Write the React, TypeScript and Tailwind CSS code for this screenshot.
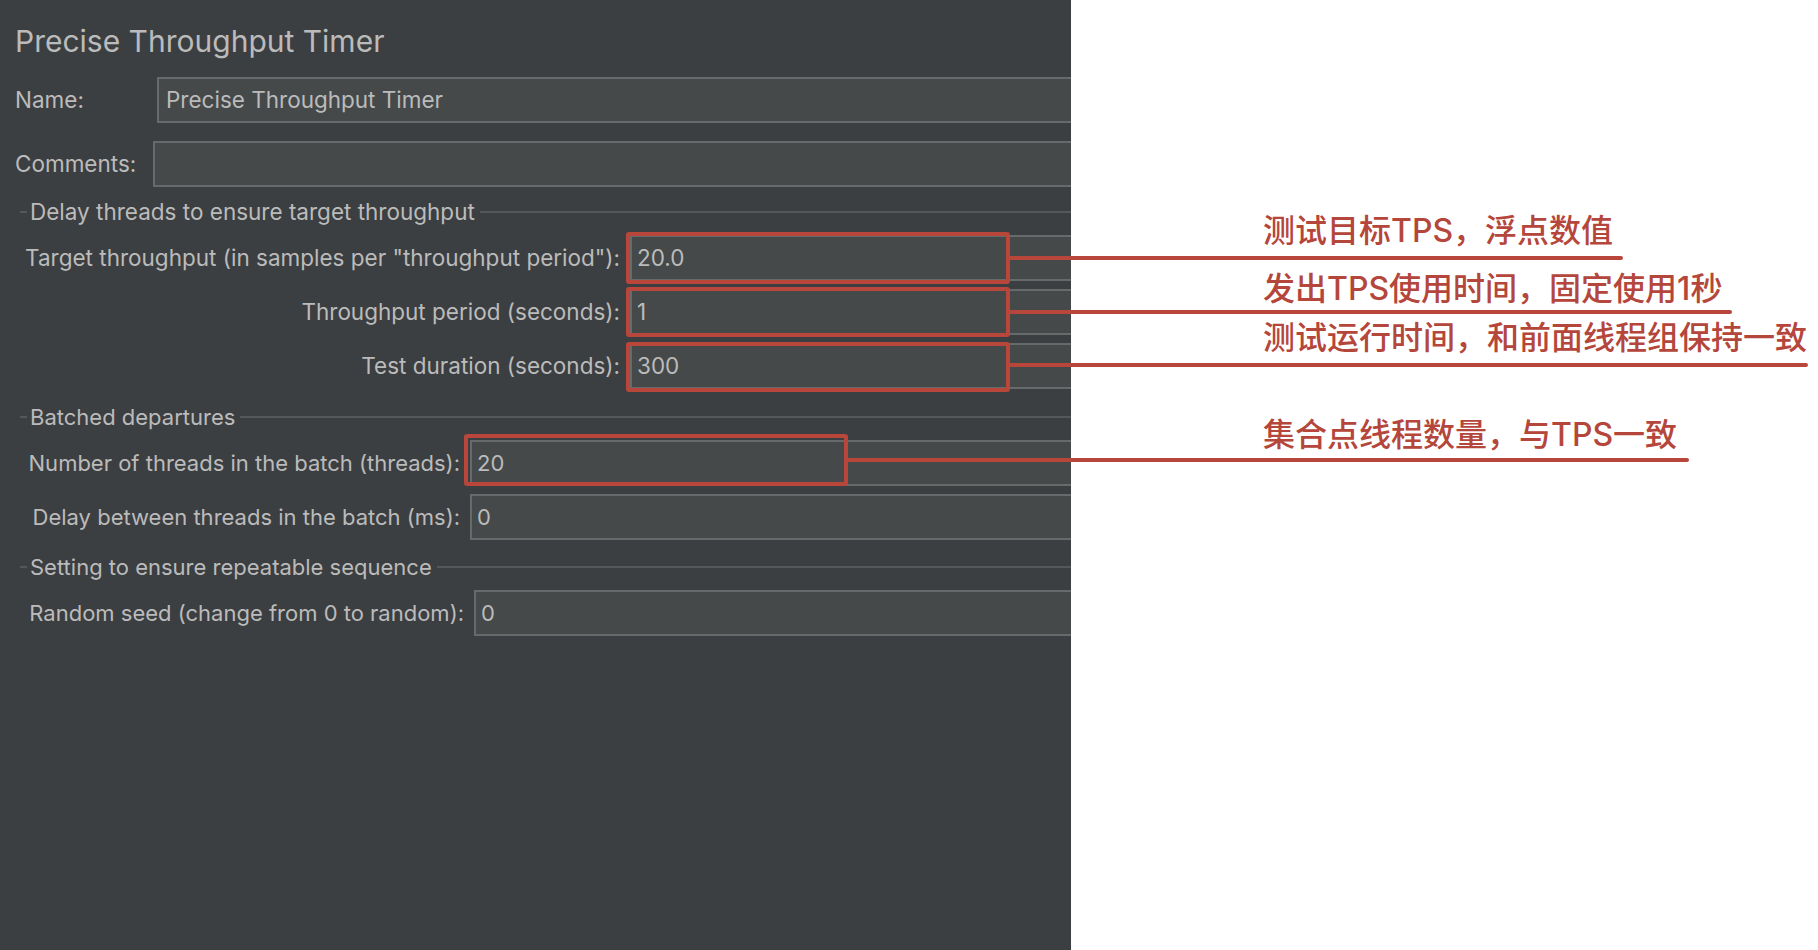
import React from 'react';

const UI_FONT = { fontFamily: 'Inter, "Liberation Sans", sans-serif' };
const NOTE_FONT = { fontFamily: 'Inter, "Noto Sans CJK SC", sans-serif' };

function Field({ value = '', className = '' }: { value?: string; className?: string }) {
    return (
        <div
            className={`flex-1 h-[46px] flex items-center bg-[#45494a] border-2 border-r-0 border-[#676a6b] text-[#bbbbbb] whitespace-nowrap ${className}`}
        >
            {value}
        </div>
    );
}

function SectionTitle({ title }: { title: string }) {
    return (
        <div className="flex items-center h-[24px] pl-[20px]">
            <span className="w-[7px] h-[2px] bg-[#555859]" />
            <span className="ml-[3px] mr-[5px] text-[#bbbbbb] whitespace-nowrap">{title}</span>
            <span className="flex-1 h-[2px] bg-[#555859]" />
        </div>
    );
}

function Row({ label, value, labelWidth }: { label: string; value: string; labelWidth: string }) {
    return (
        <div className="flex items-center pl-[26px]">
            <div className={`${labelWidth} flex justify-end whitespace-nowrap text-[#bbbbbb]`}>{label}</div>
            <Field value={value} className="ml-[10px] pl-[5px]" />
        </div>
    );
}

// Red call-out boxes and leader lines drawn over the form
function Callouts() {
    const red = '#b8463b';
    return (
        <svg className="absolute inset-0 pointer-events-none" width={1818} height={950}>
            <g fill="none" stroke={red} strokeWidth={4}>
                <rect x={628} y={234} width={380} height={48} rx={1} />
                <rect x={628} y={289} width={380} height={46} rx={1} />
                <rect x={628} y={344} width={380} height={46} rx={1} />
                <rect x={466} y={436} width={380} height={48} rx={1} />
            </g>
            <g stroke={red} strokeWidth={4} strokeLinecap="round">
                <line x1={1010} y1={258} x2={1621} y2={258} />
                <line x1={1010} y1={312} x2={1730} y2={312} />
                <line x1={1010} y1={365} x2={1806} y2={365} />
                <line x1={848} y1={460} x2={1687} y2={460} />
            </g>
        </svg>
    );
}

export default function App() {
    return (
        <div className="relative w-[1818px] h-[950px] bg-white flex overflow-hidden text-[22.5px]" style={UI_FONT}>
            {/* Timer settings panel */}
            <div className="w-[1071px] h-full bg-[#3c3f41] overflow-hidden flex flex-col">
                <div className="pt-[24px] pl-[15px] h-[58px] text-[30px] leading-[34px] text-[#bbbbbb] whitespace-nowrap">
                    Precise Throughput Timer
                </div>

                <div className="mt-[19px] flex items-center pl-[15px]">
                    <div className="w-[142px] text-[#bbbbbb]">Name:</div>
                    <Field value="Precise Throughput Timer" className="pl-[7px]" />
                </div>
                <div className="mt-[18px] flex items-center pl-[15px]">
                    <div className="w-[138px] text-[#bbbbbb]">Comments:</div>
                    <Field />
                </div>

                <div className="mt-[13px]">
                    <SectionTitle title="Delay threads to ensure target throughput" />
                    <div className="mt-[11px] flex flex-col gap-[8px]">
                        <Row label={'Target throughput (in samples per "throughput period"):'} value="20.0" labelWidth="w-[594px]" />
                        <Row label="Throughput period (seconds):" value="1" labelWidth="w-[594px]" />
                        <Row label="Test duration (seconds):" value="300" labelWidth="w-[594px]" />
                    </div>
                </div>

                <div className="mt-[16px] text-[22px]">
                    <SectionTitle title="Batched departures" />
                    <div className="mt-[11px] flex flex-col gap-[8px]">
                        <Row label="Number of threads in the batch (threads):" value="20" labelWidth="w-[434px]" />
                        <Row label="Delay between threads in the batch (ms):" value="0" labelWidth="w-[434px]" />
                    </div>
                </div>

                <div className="mt-[15px] text-[22px]">
                    <SectionTitle title="Setting to ensure repeatable sequence" />
                    <div className="mt-[11px] flex flex-col">
                        <Row label="Random seed (change from 0 to random):" value="0" labelWidth="w-[438px]" />
                    </div>
                </div>
            </div>

            {/* Notes beside the fields */}
            <div className="flex-1 flex flex-col pl-[192px] text-[32px] leading-[40px] text-[#b5463b] font-medium whitespace-nowrap" style={NOTE_FONT}>
                <div className="mt-[211px]">测试目标TPS，浮点数值</div>
                <div className="mt-[18px]">发出TPS使用时间，固定使用1秒</div>
                <div className="mt-[9px]">测试运行时间，和前面线程组保持一致</div>
                <div className="mt-[57px]">集合点线程数量，与TPS一致</div>
            </div>

            <Callouts />
        </div>
    );
}
